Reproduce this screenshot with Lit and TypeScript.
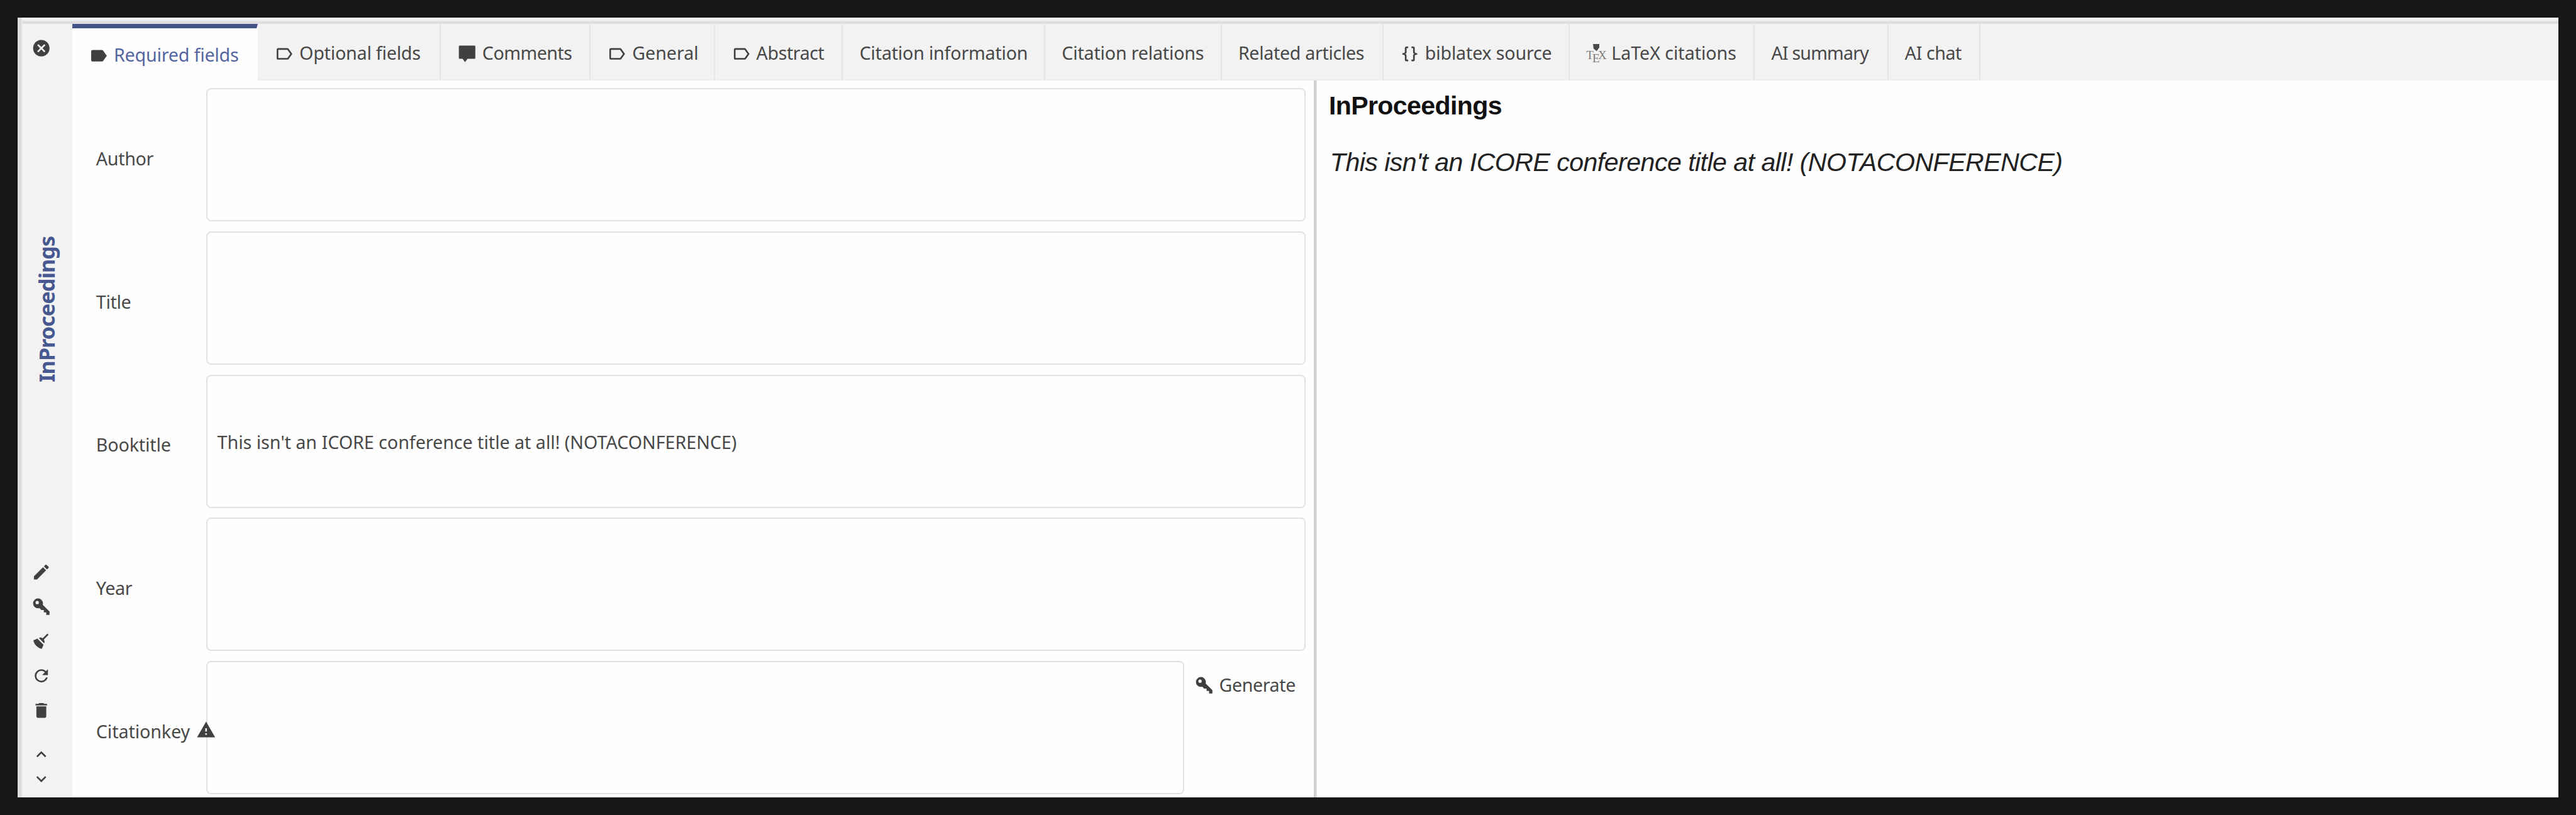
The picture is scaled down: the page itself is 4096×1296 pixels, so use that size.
import { LitElement, html, svg, css, nothing, PropertyValues } from "lit";
import { customElement, property } from "lit/decorators.js";
import { styleMap } from "lit/directives/style-map.js";

/** Pixels per design unit. */
const UNIT = 4096 / 4380;
const u = (n: number) => `${(n * UNIT).toFixed(3)}px`;

const ICONS: Record<string, string> = {
  close:
    "M12,2C17.53,2 22,6.47 22,12C22,17.53 17.53,22 12,22C6.47,22 2,17.53 2,12C2,6.47 6.47,2 12,2M15.59,7L12,10.59L8.41,7L7,8.41L10.59,12L7,15.59L8.41,17L12,13.41L15.59,17L17,15.59L13.41,12L17,8.41L15.59,7Z",
  pencil:
    "M20.71,7.04C21.1,6.65 21.1,6 20.71,5.63L18.37,3.29C18,2.9 17.35,2.9 16.96,3.29L15.12,5.12L18.87,8.87M3,17.25V21H6.75L17.81,9.93L14.06,6.18L3,17.25Z",
  key:
    "M22,18V22H18V19H15V16H12L9.74,13.74C9.19,13.91 8.61,14 8,14A6,6 0 0,1 2,8A6,6 0 0,1 8,2A6,6 0 0,1 14,8C14,8.61 13.91,9.19 13.74,9.74L22,18M7,5A2,2 0 0,0 5,7A2,2 0 0,0 7,9A2,2 0 0,0 9,7A2,2 0 0,0 7,5Z",
  broom:
    "M19.36,2.72L20.78,4.14L15.06,9.85C16.13,11.39 16.28,13.24 15.38,14.44L9.06,8.12C10.26,7.22 12.11,7.37 13.65,8.44L19.36,2.72M5.93,17.57C3.92,15.56 2.69,13.16 2.35,10.92L7.23,8.83L14.67,16.27L12.58,21.15C10.34,20.81 7.94,19.58 5.93,17.57Z",
  refresh:
    "M17.65,6.35C16.2,4.9 14.21,4 12,4A8,8 0 0,0 4,12A8,8 0 0,0 12,20C15.73,20 18.84,17.45 19.73,14H17.65C16.83,16.33 14.61,18 12,18A6,6 0 0,1 6,12A6,6 0 0,1 12,6C13.66,6 15.14,6.69 16.22,7.78L13,11H20V4L17.65,6.35Z",
  trash:
    "M19,4H15.5L14.5,3H9.5L8.5,4H5V6H19M6,19A2,2 0 0,0 8,21H16A2,2 0 0,0 18,19V7H6V19Z",
  up: "M7.41,15.41L12,10.83L16.59,15.41L18,14L12,8L6,14L7.41,15.41Z",
  down: "M7.41,8.58L12,13.17L16.59,8.58L18,10L12,16L6,10L7.41,8.58Z",
  alert: "M13,14H11V10H13M13,18H11V16H13M1,21H23L12,2L1,21Z",
  label:
    "M17.63,5.84C17.27,5.33 16.67,5 16,5H5A2,2 0 0,0 3,7V17A2,2 0 0,0 5,19H16C16.67,19 17.27,18.66 17.63,18.15L22,12L17.63,5.84Z",
  labelOutline:
    "M16,17H5V7H16L19.55,12M17.63,5.84C17.27,5.33 16.67,5 16,5H5A2,2 0 0,0 3,7V17A2,2 0 0,0 5,19H16C16.67,19 17.27,18.66 17.63,18.15L22,12L17.63,5.84Z",
  comment:
    "M3,2H21A1,1 0 0,1 22,3V17A1,1 0 0,1 21,18H12.5L9.5,22L6.5,18H3A1,1 0 0,1 2,17V3A1,1 0 0,1 3,2Z",
  braces:
    "M8,3A2,2 0 0,0 6,5V9A2,2 0 0,1 4,11H3V13H4A2,2 0 0,1 6,15V19A2,2 0 0,0 8,21H10V19H8V14A2,2 0 0,0 6,12A2,2 0 0,0 8,10V5H10V3M16,3A2,2 0 0,1 18,5V9A2,2 0 0,0 20,11H21V13H20A2,2 0 0,0 18,15V19A2,2 0 0,1 16,21H14V19H16V14A2,2 0 0,1 18,12A2,2 0 0,1 16,10V5H14V3H16Z",
};

@customElement("ui-icon")
class UiIcon extends LitElement {
  @property() name = "";

  static styles = css`
    :host {
      display: block;
      flex: none;
      width: 31.42px;
      height: 31.42px;
      color: #404040;
    }
    .glyph {
      display: block;
      width: 100%;
      height: 100%;
      fill: currentColor;
      overflow: visible;
    }
    .tex {
      font-family: "Liberation Serif", serif;
      font-size: 14.5px;
      fill: #7c7c7c;
    }
    .pin {
      fill: #4a4a4a;
    }
  `;

  render() {
    if (this.name === "tex") {
      return html`<svg class="glyph" viewBox="0 0 24 24">
        ${svg`
          <path class="pin" d="M8.4,0H16V4.4L12.8,8.6L9,5.6Z" />
          <text class="tex" x="0.2" y="18.4">T</text>
          <text class="tex" x="7.6" y="22">E</text>
          <text class="tex" x="14.6" y="18.4">X</text>`}
      </svg>`;
    }
    return html`<svg class="glyph" viewBox="0 0 24 24">
      <path fill-rule="evenodd" d=${ICONS[this.name] ?? ""} />
    </svg>`;
  }
}

/** One line of text whose tracking is adjusted so its ink spans a set width. */
@customElement("tracked-text")
class TrackedText extends LitElement {
  @property() text = "";
  @property({ type: Number }) ink = 0;

  static styles = css`
    :host {
      display: block;
      flex: none;
      white-space: pre;
    }
  `;

  protected updated(_: PropertyValues) {
    const cs = getComputedStyle(this);
    const ctx = document.createElement("canvas").getContext("2d");
    if (!ctx || this.text.length < 2 || !this.ink) return;
    ctx.font = `${cs.fontStyle} ${cs.fontWeight} ${cs.fontSize} ${cs.fontFamily}`;
    const m = ctx.measureText(this.text);
    const natural = m.actualBoundingBoxLeft + m.actualBoundingBoxRight;
    const gap = (this.ink * UNIT - natural) / (this.text.length - 1);
    this.style.letterSpacing = `${gap.toFixed(3)}px`;
  }

  render() {
    return html`${this.text}`;
  }
}

interface Tab {
  text: string;
  width: number;
  ink: number;
  icon?: string;
}

const TABS: Tab[] = [
  { text: "Required fields", width: 315.5, ink: 209.6, icon: "label" },
  { text: "Optional fields", width: 311, ink: 204.5, icon: "labelOutline" },
  { text: "Comments", width: 255, ink: 151.3, icon: "comment" },
  { text: "General", width: 211, ink: 109, icon: "labelOutline" },
  { text: "Abstract", width: 218, ink: 115.5, icon: "labelOutline" },
  { text: "Citation information", width: 344, ink: 283.6 },
  { text: "Citation relations", width: 300, ink: 240 },
  { text: "Related articles", width: 275, ink: 211.6 },
  { text: "biblatex source", width: 317, ink: 212.5, icon: "braces" },
  { text: "LaTeX citations", width: 314.5, ink: 209.5, icon: "tex" },
  { text: "AI summary", width: 227, ink: 166.4 },
  { text: "AI chat", width: 157, ink: 96.5 },
];

interface Field {
  label: string;
  ink: number;
  value?: string;
  valueInk?: number;
  warn?: boolean;
  action?: string;
}

const FIELDS: Field[] = [
  { label: "Author", ink: 98 },
  { label: "Title", ink: 58.5 },
  {
    label: "Booktitle",
    ink: 124,
    value: "This isn't an ICORE conference title at all! (NOTACONFERENCE)",
    valueInk: 882.5,
  },
  { label: "Year", ink: 62 },
  { label: "Citationkey", ink: 159, warn: true, action: "Generate" },
];

const TOOLS = ["pencil", "key", "broom", "refresh", "trash"];

@customElement("app-root")
class AppRoot extends LitElement {
  static styles = css`
    :host {
      --u: 0.93516px;
      display: block;
      box-sizing: border-box;
      width: 4096px;
      height: 1296px;
      padding: calc(var(--u) * 30);
      background: #171717;
      overflow: hidden;
      font-family: "Noto Sans", "Open Sans", sans-serif;
      font-size: calc(var(--u) * 30.6);
      line-height: calc(var(--u) * 44);
      color: #484848;
    }
    .window {
      display: flex;
      flex-direction: row;
      height: 100%;
      background: #fefefe;
    }
    .edge {
      flex: none;
      width: calc(var(--u) * 8.5);
      background: linear-gradient(to right, #dcdcdc 60%, #ececec);
    }
    .frame {
      flex: 1;
      min-width: 0;
      display: flex;
      flex-direction: column;
    }
    .shade {
      flex: none;
      height: calc(var(--u) * 10.5);
      background: linear-gradient(#ffffff 10%, #f0f0f0 40%, #dadada 78%, #e2e2e2);
    }
    .body {
      flex: 1;
      min-height: 0;
      display: flex;
    }
    .sidebar {
      flex: none;
      box-sizing: border-box;
      width: calc(var(--u) * 84.5);
      display: flex;
      flex-direction: column;
      align-items: flex-start;
      padding: calc(var(--u) * 24.7) 0 calc(var(--u) * 14.2) calc(var(--u) * 14.7);
      background: #f2f2f2;
    }
    .entry-type {
      writing-mode: vertical-rl;
      transform: rotate(180deg);
      margin: calc(var(--u) * 301.5) 0 0 calc(var(--u) * 4.5);
      height: calc(var(--u) * 250);
      font-weight: 700;
      font-size: calc(var(--u) * 36.5);
      color: #475890;
    }
    .tools {
      margin-top: auto;
      display: flex;
      flex-direction: column;
      gap: calc(var(--u) * 25.1);
    }
    .steps {
      margin-top: calc(var(--u) * 41.4);
      display: flex;
      flex-direction: column;
      gap: calc(var(--u) * 8.4);
    }
    .main {
      flex: 1;
      min-width: 0;
      display: flex;
      flex-direction: column;
    }
    .tabs {
      flex: none;
      height: calc(var(--u) * 96);
      display: flex;
      background: #f2f2f2;
    }
    .tab {
      flex: none;
      box-sizing: border-box;
      display: flex;
      align-items: center;
      gap: calc(var(--u) * 9);
      padding: calc(var(--u) * 3) 0 0 calc(var(--u) * 28);
      border-right: calc(var(--u) * 3) solid #e5e5e5;
      border-bottom: calc(var(--u) * 3) solid #ededed;
    }
    .tab ui-icon {
      margin-top: calc(var(--u) * 5);
    }
    .tab.active {
      background: #fefefe;
      border-right-color: #fefefe;
      border-bottom-color: #fefefe;
      border-top: calc(var(--u) * 7.5) solid #43558a;
      color: #52659f;
    }
    .content {
      flex: 1;
      min-height: 0;
      display: flex;
    }
    .form {
      flex: none;
      box-sizing: border-box;
      width: calc(var(--u) * 2111);
      padding: calc(var(--u) * 13.6) calc(var(--u) * 14) 0 calc(var(--u) * 40.5);
      display: flex;
      flex-direction: column;
      gap: calc(var(--u) * 17);
    }
    .row {
      display: flex;
      height: calc(var(--u) * 226.5);
    }
    .caption {
      flex: none;
      width: calc(var(--u) * 187);
      display: flex;
      align-items: center;
      padding-top: calc(var(--u) * 11);
      box-sizing: border-box;
    }
    .caption ui-icon {
      position: relative;
      z-index: 1;
      margin: 0 calc(var(--u) * -16.5) calc(var(--u) * 4) auto;
    }
    .field {
      flex: 1;
      box-sizing: border-box;
      display: flex;
      align-items: center;
      padding: calc(var(--u) * 3) 0 0 calc(var(--u) * 17);
      border: calc(var(--u) * 3) solid #e1e1e1;
      border-radius: calc(var(--u) * 8);
    }
    .action {
      flex: none;
      box-sizing: border-box;
      width: calc(var(--u) * 206);
      height: calc(var(--u) * 80);
      display: flex;
      align-items: center;
      gap: calc(var(--u) * 8.8);
      padding-left: calc(var(--u) * 16.5);
    }
    .action ui-icon {
      margin-top: calc(var(--u) * 3);
    }
    .splitter {
      flex: none;
      width: calc(var(--u) * 5);
      background: linear-gradient(to right, #cfcfcf 50%, #e4e4e4);
    }
    .preview {
      flex: 1;
      display: flex;
      flex-direction: column;
      gap: calc(var(--u) * 36);
      padding: calc(var(--u) * 13.6) 0 0 calc(var(--u) * 20.5);
      font-family: "Liberation Sans", Arial, sans-serif;
      font-size: calc(var(--u) * 44);
      line-height: calc(var(--u) * 60);
      color: #111111;
    }
    .heading {
      font-weight: 700;
    }
    .citation {
      font-style: italic;
      color: #222222;
      padding-left: calc(var(--u) * 2);
    }
  `;

  private renderTab(tab: Tab, index: number) {
    return html`<div
      class=${index === 0 ? "tab active" : "tab"}
      style=${styleMap({ width: u(tab.width) })}
    >
      ${tab.icon ? html`<ui-icon name=${tab.icon}></ui-icon>` : nothing}
      <tracked-text text=${tab.text} ink=${tab.ink}></tracked-text>
    </div>`;
  }

  private renderField(f: Field) {
    return html`<div class="row">
      <div class="caption">
        <tracked-text text=${f.label} ink=${f.ink}></tracked-text>
        ${f.warn ? html`<ui-icon name="alert"></ui-icon>` : nothing}
      </div>
      <div class="field">
        ${f.value
          ? html`<tracked-text text=${f.value} ink=${f.valueInk ?? 0}></tracked-text>`
          : nothing}
      </div>
      ${f.action
        ? html`<div class="action">
            <ui-icon name="key"></ui-icon>
            <tracked-text text=${f.action} ink="128"></tracked-text>
          </div>`
        : nothing}
    </div>`;
  }

  render() {
    return html`<div class="window">
      <div class="edge"></div>
      <div class="frame">
        <div class="shade"></div>
        <div class="body">
          <div class="sidebar">
            <ui-icon name="close"></ui-icon>
            <tracked-text class="entry-type" text="InProceedings" ink="246.7"></tracked-text>
            <div class="tools">${TOOLS.map((n) => html`<ui-icon name=${n}></ui-icon>`)}</div>
            <div class="steps">
              <ui-icon name="up"></ui-icon>
              <ui-icon name="down"></ui-icon>
            </div>
          </div>
          <div class="main">
            <div class="tabs">${TABS.map((t, i) => this.renderTab(t, i))}</div>
            <div class="content">
              <div class="form">${FIELDS.map((f) => this.renderField(f))}</div>
              <div class="splitter"></div>
              <div class="preview">
                <tracked-text class="heading" text="InProceedings" ink="291.6"></tracked-text>
                <tracked-text
                  class="citation"
                  text="This isn't an ICORE conference title at all! (NOTACONFERENCE)"
                  ink="1241"
                ></tracked-text>
              </div>
            </div>
          </div>
        </div>
      </div>
    </div>`;
  }
}
